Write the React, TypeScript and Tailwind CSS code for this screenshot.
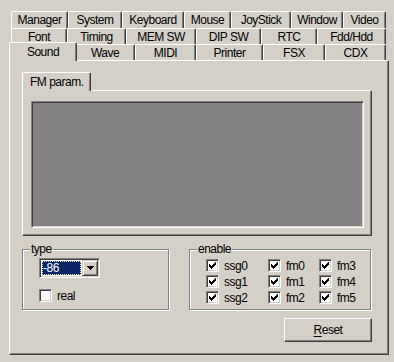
import React from 'react';

// Tab rows of the property sheet (width of every tab in pixels)
const row1 = [
  { label: 'Manager', w: 'w-[57px]' },
  { label: 'System', w: 'w-[54px]' },
  { label: 'Keyboard', w: 'w-[62px]' },
  { label: 'Mouse', w: 'w-[47px]' },
  { label: 'JoyStick', w: 'w-[60px]' },
  { label: 'Window', w: 'w-[52px]' },
  { label: 'Video', w: 'w-[43px]' },
];
const row2 = [
  { label: 'Font', w: 'w-[56px]' },
  { label: 'Timing', w: 'w-[59px]' },
  { label: 'MEM SW', w: 'w-[70px]' },
  { label: 'DIP SW', w: 'w-[65px]' },
  { label: 'RTC', w: 'w-[56px]' },
  { label: 'Fdd/Hdd', w: 'w-[69px]' },
];
const row3 = [
  { label: 'Wave', w: 'w-[60px]' },
  { label: 'MIDI', w: 'w-[61px]' },
  { label: 'Printer', w: 'w-[67px]' },
  { label: 'FSX', w: 'w-[62px]' },
  { label: 'CDX', w: 'w-[61px]' },
];

const enables = ['ssg0', 'fm0', 'fm3', 'ssg1', 'fm1', 'fm4', 'ssg2', 'fm2', 'fm5'];

const Tab: React.FC<{ label: string; w: string }> = ({ label, w }) => (
  <div
    className={`${w} h-full shrink-0 flex items-center justify-center rounded-t-[2px] border-l border-t border-r border-l-white border-t-white border-r-[#404040] shadow-[inset_-1px_0_0_#808080]`}
  >
    {label}
  </div>
);

const Check: React.FC<{ checked?: boolean }> = ({ checked }) => (
  <span className="w-[13px] h-[13px] shrink-0 flex items-center justify-center bg-white border border-t-[#808080] border-l-[#808080] border-r-white border-b-white shadow-[inset_1px_1px_0_#404040,inset_-1px_-1px_0_#d4d0c8]">
    {checked && (
      <svg width="7" height="7" viewBox="0 0 7 7" shapeRendering="crispEdges">
        <path
          d="M6 0h1v3h-1zM5 1h1v3h-1zM4 2h1v3h-1zM3 3h1v3h-1zM2 4h1v3h-1zM1 3h1v3h-1zM0 2h1v3h-1z"
          fill="#000"
        />
      </svg>
    )}
  </span>
);

const Group: React.FC<{ label: string; className: string; children: React.ReactNode }> = ({
  label,
  className,
  children,
}) => (
  <div className={`relative border border-[#808080] shadow-[1px_1px_0_#fff,inset_1px_1px_0_#fff] ${className}`}>
    <span className="absolute -top-[8px] left-[7px] px-[1px] bg-[#d4d0c8] leading-[14px]">{label}</span>
    {children}
  </div>
);

const App: React.FC = () => {
  return (
    <div className="w-[394px] h-[362px] bg-[#d4d0c8] pt-[11px] text-black text-[12px] leading-[14px] tracking-[-0.5px] font-['Liberation_Sans',Arial,sans-serif] overflow-hidden">
      {/* Tabs */}
      <div className="ml-[11px] w-[375px]">
        <div className="flex h-[17px]">
          {row1.map((t) => (
            <Tab key={t.label} {...t} />
          ))}
        </div>
        <div className="flex h-[16px]">
          {row2.map((t) => (
            <Tab key={t.label} {...t} />
          ))}
        </div>
        <div className="flex h-[16px]">
          <div className="relative z-10 w-[68px] h-[19px] -mx-[2px] -mt-[2px] shrink-0 flex items-center justify-center bg-[#d4d0c8] rounded-t-[2px] border-l border-t border-r border-l-white border-t-white border-r-[#404040] shadow-[inset_-1px_0_0_#808080]">
            Sound
          </div>
          {row3.map((t) => (
            <Tab key={t.label} {...t} />
          ))}
        </div>
      </div>

      {/* Page */}
      <div className="ml-[9px] w-[380px] h-[295px] border-l border-t border-r border-b border-l-white border-t-white border-r-[#404040] border-b-[#404040] shadow-[inset_-1px_-1px_0_#808080]">
        <div className="ml-[12px] mt-[11px]">
          <div className="relative z-10 w-[69px] h-[19px] -mb-[1px] pl-[7px] flex items-center bg-[#d4d0c8] rounded-t-[2px] border-l border-t border-r border-l-white border-t-white border-r-[#404040] shadow-[inset_-1px_0_0_#808080]">
            FM param.
          </div>
          <div className="w-[350px] h-[146px] pl-[8px] pt-[10px] border-l border-t border-r border-b border-l-white border-t-white border-r-[#404040] border-b-[#404040] shadow-[inset_-1px_-1px_0_#808080]">
            <div className="w-[333px] h-[127px] bg-[#838184] border border-t-[#808080] border-l-[#808080] border-r-white border-b-white shadow-[inset_1px_1px_0_#404040,inset_-1px_-1px_0_#d4d0c8]" />
          </div>
        </div>

        <div className="flex ml-[12px] mt-[13px] gap-[20px]">
          <Group label="type" className="w-[147px] h-[61px] pl-[16px] pt-[8px]">
            <div className="w-[61px] h-[20px] p-[1px] flex items-center bg-white border border-t-[#808080] border-l-[#808080] border-r-white border-b-white shadow-[inset_1px_1px_0_#404040,inset_-1px_-1px_0_#d4d0c8]">
              <div className="ml-[1px] w-[39px] h-[14px] bg-[#0a246a] border border-dotted border-[#e8e8a0] text-white flex items-center leading-[12px]">
                -86
              </div>
              <div className="ml-auto w-[16px] h-[16px] flex items-center justify-center bg-[#d4d0c8] border border-t-[#d4d0c8] border-l-[#d4d0c8] border-r-[#404040] border-b-[#404040] shadow-[inset_1px_1px_0_#fff,inset_-1px_-1px_0_#808080]">
                <svg width="7" height="4" viewBox="0 0 7 4" shapeRendering="crispEdges">
                  <path d="M0 0h7v1h-7zM1 1h5v1h-5zM2 2h3v1h-3zM3 3h1v1h-1z" fill="#000" />
                </svg>
              </div>
            </div>
            <div className="mt-[11px] flex items-center gap-[5px] h-[13px]">
              <Check />
              <span>real</span>
            </div>
          </Group>

          <Group label="enable" className="w-[182px] h-[61px] pl-[16px] pt-[9px]">
            <div className="grid grid-cols-[62px_51px_50px] auto-rows-[16px]">
              {enables.map((e) => (
                <div key={e} className="flex items-center gap-[5px] h-[13px]">
                  <Check checked />
                  <span>{e}</span>
                </div>
              ))}
            </div>
          </Group>
        </div>

        <button className="ml-[274px] mt-[8px] w-[88px] h-[24px] flex items-center justify-center bg-[#d4d0c8] border border-t-white border-l-white border-r-[#404040] border-b-[#404040] shadow-[inset_-1px_-1px_0_#808080]">
          <span>
            <span className="underline underline-offset-[2px]">R</span>eset
          </span>
        </button>
      </div>
    </div>
  );
};

export default App;
